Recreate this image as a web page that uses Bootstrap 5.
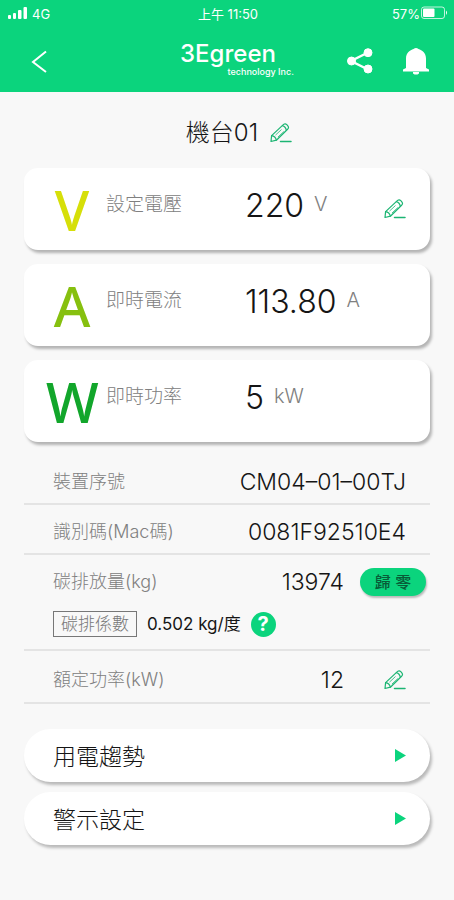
<!DOCTYPE html>
<html lang="zh-Hant">
<head>
<meta charset="utf-8">
<meta name="viewport" content="width=device-width, initial-scale=1">
<title>機台01</title>
<link rel="stylesheet" href="https://cdn.jsdelivr.net/npm/bootstrap@5.3.0/dist/css/bootstrap.min.css">
<style>
  :root { --brand: #0bd47d; --ink: #151515; --soft: #808080; }
  body { background: #f8f8f8; color: var(--ink); font-family: Inter, "Noto Sans CJK TC", sans-serif; font-weight: 300; }
  svg { display: block; }
  .top-bar { background: var(--brand); color: #fff; height: 92px; }
  .status-line { height: 30px; padding: 0 6px 0 8px; font-size: 13px; font-weight: 400; }
  .three-cols { display: grid; grid-template-columns: 1fr auto 1fr; align-items: center; }
  .nav-line { height: 62px; padding: 0 24px 0 28px; }
  .nav-icons { gap: 28px; }
  .plain-btn { background: none; border: 0; padding: 0; color: inherit; }
  .brand-logo { color: #fff; text-decoration: none; padding-left: 16px; }
  .brand-name { font-size: 24px; line-height: 22px; font-weight: 500; padding-right: 18px; }
  .brand-sub { font-size: 9px; line-height: 14px; font-weight: 500; text-align: right; }
  .page { padding: 24px; }
  .machine-name { font-size: 24px; line-height: 34px; font-weight: 300; margin: 0; }
  .title-line { gap: 12px; padding-left: 24px; margin-bottom: 18px; }
  .pencil { color: #1cb573; }
  .meter { display: grid; grid-template-columns: 52px 1fr 1fr 22px; column-gap: 8px; align-items: center; height: 82px; padding: 0 24px 0 22px; background: #fff; border-radius: 14px; box-shadow: 2px 3px 3px rgba(0,0,0,.28); }
  .meter-letter { font: 500 56px/80px "Noto Sans", sans-serif; text-align: center; white-space: nowrap; }
  .letter-v { color: #d6df09; } .letter-a { color: #86c00f; } .letter-w { color: #12a62b; }
  .meter-label { font-size: 19px; line-height: 28px; color: var(--soft); padding-bottom: 8px; white-space: nowrap; }
  .meter-value { font-size: 32px; line-height: 36px; padding-bottom: 7px; gap: 10px; white-space: nowrap; }
  .meter-unit { font-size: 20px; line-height: 28px; padding-bottom: 4px; color: var(--soft); }
  .stack { gap: 14px; }
  .details { padding-top: 13px; margin-bottom: 25px; }
  .info-row { border-bottom: 2px solid #e4e4e4; padding: 6px 24px 0 29px; min-height: 50px; }
  .info-row.emission { padding-top: 13px; }
  .info-row.rated { min-height: 53px; }
  .info-label { font-size: 18px; line-height: 28px; color: var(--soft); }
  .info-value { font-size: 23px; line-height: 28px; }
  .rated .pencil { margin-left: 40px; }
  .reset-btn { width: 66px; height: 28px; padding: 0; border: 0; border-radius: 14px; background: var(--brand); color: #085c38; font-size: 16px; line-height: 28px; font-weight: 500; box-shadow: 1px 2px 2px rgba(0,0,0,.25); margin: 0 -20px 0 16px; }
  .factor-tag { border: 1px solid #777; color: #777; font-size: 17px; line-height: 24px; padding: 0 7px; }
  .factor-value { font-size: 17px; line-height: 26px; font-weight: 400; }
  .factor-line { gap: 10px; padding: 15px 0 12px; }
  .help-btn { width: 25px; height: 25px; border-radius: 50%; background: var(--brand); color: #fff; font-size: 20px; line-height: 25px; font-weight: 700; }
  .pills { gap: 10px; }
  .link-pill { height: 53px; padding: 4px 24px 0 29px; border-radius: 27px; background: #fff; color: var(--ink); font-size: 23px; text-decoration: none; box-shadow: 2px 3px 3px rgba(0,0,0,.25); }
  .link-pill svg { margin-bottom: 4px; }
</style>
<script src="https://cdn.jsdelivr.net/npm/bootstrap@5.3.0/dist/js/bootstrap.bundle.min.js"></script>
</head>
<body>
<svg width="0" height="0" class="position-absolute" aria-hidden="true">
  <symbol id="pencil" viewBox="0 0 22 20">
    <g fill="none" stroke="currentColor" stroke-width="1.200" stroke-linejoin="round" stroke-linecap="round">
      <path d="M1 18.500 1.600 12.600 13.600 1.400Q15.200.1 16.800 1.600L18 3.100Q19.200 4.800 17.600 6.200L6.400 17.200Z"/>
      <path d="M1.600 12.600Q5.400 13 6.400 17.200M12.400 2.600Q15.600 3.400 16.400 7.300"/>
      <path d="M5.800 11.800 11.200 6.800M8.200 13.800 13.600 8.800" stroke-width=".8"/>
      <path d="M10.500 18.600H21" stroke-width="1.500"/>
    </g>
  </symbol>
</svg>

<header class="top-bar">
  <div class="status-line three-cols">
    <div class="d-flex align-items-center gap-1">
      <svg width="20" height="14" viewBox="0 0 20 14" fill="#fff" class="mb-1" aria-hidden="true"><rect y="9" width="3" height="4" rx="1"/><rect x="5" y="7" width="3" height="6" rx="1"/><rect x="10" y="4" width="3.500" height="9" rx="1"/><rect x="15.500" y="1" width="3.500" height="12" rx="1"/></svg>
      <span>4G</span>
    </div>
    <div>上午 11:50</div>
    <div class="d-flex align-items-center justify-content-end">
      <span>57%</span>
      <svg width="28" height="14" viewBox="0 0 28 14" class="mb-1" aria-hidden="true"><rect x="1.500" y="1" width="23" height="11.500" rx="2.500" fill="none" stroke="#fff" stroke-opacity=".75"/><rect x="3" y="2.500" width="11.500" height="8.500" rx="1" fill="#fff"/><path d="M26 4.500q2 2 0 4.500z" fill="#fff"/></svg>
    </div>
  </div>
  <nav class="nav-line three-cols">
    <button class="plain-btn text-start" type="button" aria-label="返回">
      <svg width="20" height="24" viewBox="0 0 20 24" fill="none" stroke="#fff" stroke-width="2"><path d="M18 2.500 5 13 18 23"/></svg>
    </button>
    <a class="brand-logo d-flex flex-column" href="#"><span class="brand-name">3Egreen</span><span class="brand-sub">technology Inc.</span></a>
    <div class="nav-icons d-flex justify-content-end align-items-center">
      <button class="plain-btn" type="button" aria-label="分享">
        <svg width="28" height="26" viewBox="0 0 28 26" fill="#fff" stroke="#fff"><path d="M22 4.500 5 13 22 21.500" fill="none" stroke-width="2.500"/><circle cx="22" cy="4.700" r="4"/><circle cx="5.500" cy="13" r="4"/><circle cx="22" cy="21" r="4"/></svg>
      </button>
      <button class="plain-btn" type="button" aria-label="通知">
        <svg width="28" height="28" viewBox="0 0 28 28" fill="#fff"><path d="M4 21V11.500C4 6 8 3 11.500 2Q14 0 16.500 2C20 3 24 6 24 11.500V21L27 22.500V24.500H1V22.500ZM11 25H17V26.500L15.500 27.500H12.500L11 26.500Z"/></svg>
      </button>
    </div>
  </nav>
</header>

<main class="page">
  <div class="title-line d-flex justify-content-center align-items-center">
    <h1 class="machine-name">機台01</h1>
    <button class="plain-btn pencil" type="button" aria-label="編輯名稱"><svg width="22" height="20"><use href="#pencil"/></svg></button>
  </div>

  <section class="stack d-flex flex-column">
    <div class="meter">
      <span class="meter-letter letter-v">V</span>
      <span class="meter-label">設定電壓</span>
      <div class="meter-value d-flex align-items-center"><span>220</span><span class="meter-unit">V</span></div>
      <button class="plain-btn pencil" type="button" aria-label="編輯電壓"><svg width="22" height="20"><use href="#pencil"/></svg></button>
    </div>
    <div class="meter">
      <span class="meter-letter letter-a">A</span>
      <span class="meter-label">即時電流</span>
      <div class="meter-value d-flex align-items-center"><span>113.80</span><span class="meter-unit">A</span></div>
    </div>
    <div class="meter">
      <span class="meter-letter letter-w">W</span>
      <span class="meter-label">即時功率</span>
      <div class="meter-value d-flex align-items-center"><span>5</span><span class="meter-unit">kW</span></div>
    </div>
  </section>

  <section class="details">
    <div class="info-row d-flex align-items-center justify-content-between">
      <span class="info-label">裝置序號</span><span class="info-value">CM04–01–00TJ</span>
    </div>
    <div class="info-row d-flex align-items-center justify-content-between">
      <span class="info-label">識別碼(Mac碼)</span><span class="info-value">0081F92510E4</span>
    </div>
    <div class="info-row emission">
      <div class="d-flex align-items-center">
        <span class="info-label me-auto">碳排放量(kg)</span><span class="info-value">13974</span>
        <button class="reset-btn" type="button">歸 零</button>
      </div>
      <div class="factor-line d-flex align-items-center">
        <span class="factor-tag">碳排係數</span><span class="factor-value">0.502 kg/度</span>
        <button class="plain-btn help-btn" type="button" aria-label="說明">?</button>
      </div>
    </div>
    <div class="info-row rated d-flex align-items-center">
      <span class="info-label me-auto">額定功率(kW)</span><span class="info-value">12</span>
      <button class="plain-btn pencil" type="button" aria-label="編輯額定功率"><svg width="22" height="20"><use href="#pencil"/></svg></button>
    </div>
  </section>

  <nav class="pills d-flex flex-column">
    <a class="link-pill d-flex align-items-center justify-content-between" href="#">用電趨勢<svg width="11" height="13" fill="#0bd47d" aria-hidden="true"><path d="M0 0 11 6.500 0 13z"/></svg></a>
    <a class="link-pill d-flex align-items-center justify-content-between" href="#">警示設定<svg width="11" height="13" fill="#0bd47d" aria-hidden="true"><path d="M0 0 11 6.500 0 13z"/></svg></a>
  </nav>
</main>
</body>
</html>
